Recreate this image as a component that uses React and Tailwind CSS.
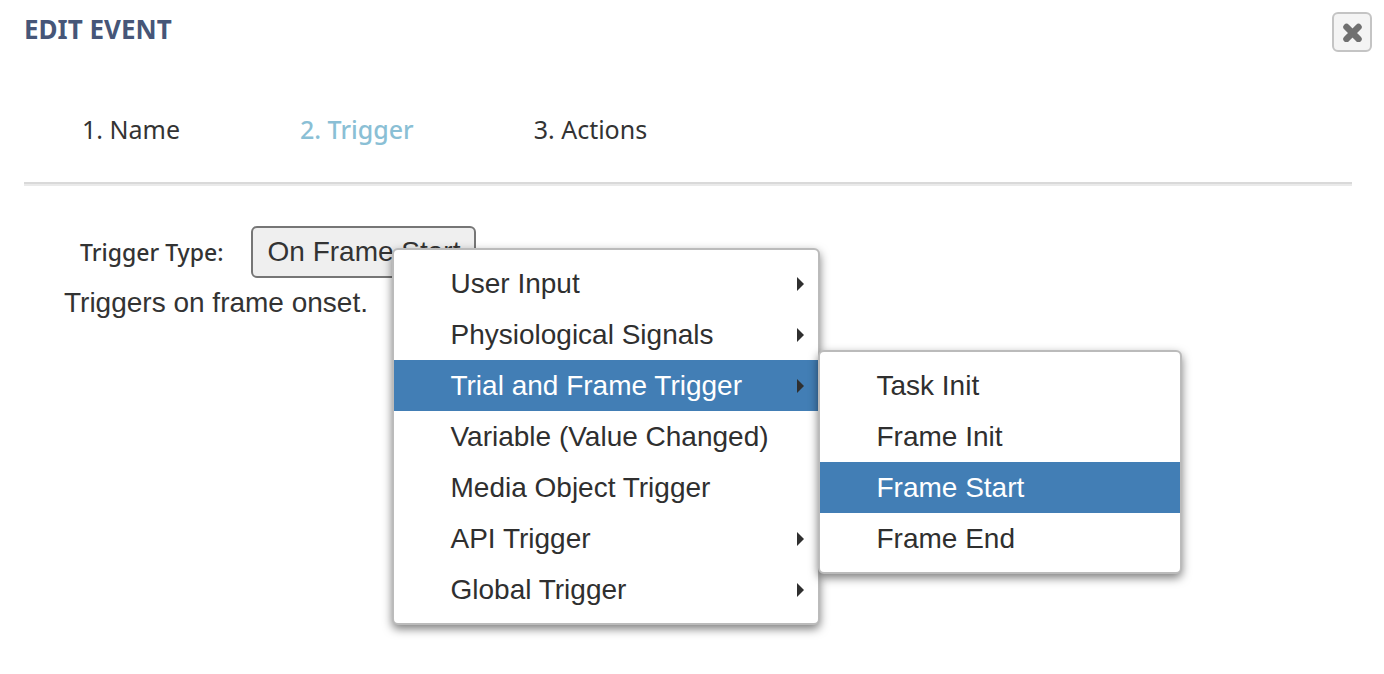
import { useState } from "react";

const STEPS = ["1. Name", "2. Trigger", "3. Actions"];

const TRIGGERS = [
  { label: "User Input", hasChildren: true },
  { label: "Physiological Signals", hasChildren: true },
  {
    label: "Trial and Frame Trigger",
    hasChildren: true,
    children: ["Task Init", "Frame Init", "Frame Start", "Frame End"],
  },
  { label: "Variable (Value Changed)" },
  { label: "Media Object Trigger" },
  { label: "API Trigger", hasChildren: true },
  { label: "Global Trigger", hasChildren: true },
];

const menuClass =
  "absolute rounded-md border-2 border-[#bbbbbb] bg-white py-2 shadow-[0_4px_10px_rgba(0,0,0,0.5)]";

function MenuItem({ label, active, arrow, onClick }) {
  return (
    <button
      type="button"
      role="menuitem"
      onClick={onClick}
      className={`flex h-[51px] w-full items-center justify-between pr-3.5 pl-14 text-left text-[28px] whitespace-nowrap ${
        active ? "bg-[#427eb5] text-white" : "text-[#2f2f2f]"
      }`}
    >
      {label}
      {arrow && (
        <svg width="7" height="14" viewBox="0 0 7 14" aria-hidden="true">
          <path d="M0 0L7 7L0 14Z" fill="#2f2f2f" />
        </svg>
      )}
    </button>
  );
}

function TriggerMenu({ selected, onSelect }) {
  const [open, setOpen] = useState("Trial and Frame Trigger");

  return (
    <ul role="menu" className={`${menuClass} top-[22px] left-[141px] z-10 w-[428px]`}>
      {TRIGGERS.map((item) => (
        <li key={item.label} role="none" className="relative">
          <MenuItem
            label={item.label}
            active={item.label === open}
            arrow={item.hasChildren}
            onClick={() => setOpen(item.label)}
          />
          {item.children && item.label === open && (
            <ul role="menu" className={`${menuClass} -top-2.5 left-full w-[364px]`}>
              {item.children.map((child) => (
                <li key={child} role="none">
                  <MenuItem
                    label={child}
                    active={child === selected}
                    onClick={() => onSelect(child)}
                  />
                </li>
              ))}
            </ul>
          )}
        </li>
      ))}
    </ul>
  );
}

export default function App() {
  const [step, setStep] = useState(1);
  const [selected, setSelected] = useState("Frame Start");
  const [menuOpen, setMenuOpen] = useState(true);

  return (
    <div className="min-h-screen bg-white pt-3 pr-3 pl-6 font-['Liberation_Sans',Arial,sans-serif] text-[28px] text-[#333333]">
      <header className="flex items-start justify-between">
        <h1 className="font-['Noto_Sans',sans-serif] text-[26px] leading-[34px] font-bold text-[#465678]">
          EDIT EVENT
        </h1>
        <button
          type="button"
          aria-label="Close"
          className="flex size-10 items-center justify-center rounded-md border-2 border-[#c4c4c4] bg-[#f4f4f4]"
        >
          <svg width="20" height="20" viewBox="0 0 20 20" aria-hidden="true">
            <path
              d="M4.5 5L16.5 17M16.5 5L4.5 17"
              stroke="#707070"
              strokeWidth="6.5"
              strokeLinecap="round"
            />
          </svg>
        </button>
      </header>

      <main className="pr-5">
        <nav className="flex gap-[120px] border-b-2 border-[#d9d9d9] pt-[60px] pb-9 pl-[58px] font-['Noto_Sans',sans-serif] text-[25px] leading-[34px]">
          {STEPS.map((label, i) => (
            <button
              key={label}
              type="button"
              onClick={() => setStep(i)}
              className={i === step ? "font-medium text-[#8abfd5]" : "text-[#333333]"}
            >
              {label}
            </button>
          ))}
        </nav>
        <div className="h-0.5 bg-[#eaeaea]" />

        <div className="flex items-center gap-7 pt-10 pl-14">
          <label
            htmlFor="trigger-type"
            className="font-['Noto_Sans',sans-serif] text-[23px] font-medium"
          >
            Trigger Type:
          </label>
          <div className="relative">
            <button
              id="trigger-type"
              type="button"
              aria-haspopup="menu"
              aria-expanded={menuOpen}
              onClick={() => setMenuOpen(!menuOpen)}
              className="block h-[52px] rounded-md border-2 border-[#767676] bg-[#efefef] px-3.5 leading-[46px]"
            >
              On {selected}
            </button>
            {menuOpen && <TriggerMenu selected={selected} onSelect={setSelected} />}
          </div>
        </div>
        <p className="pt-1 pl-10 leading-[42px]">Triggers on frame onset.</p>
      </main>
    </div>
  );
}
